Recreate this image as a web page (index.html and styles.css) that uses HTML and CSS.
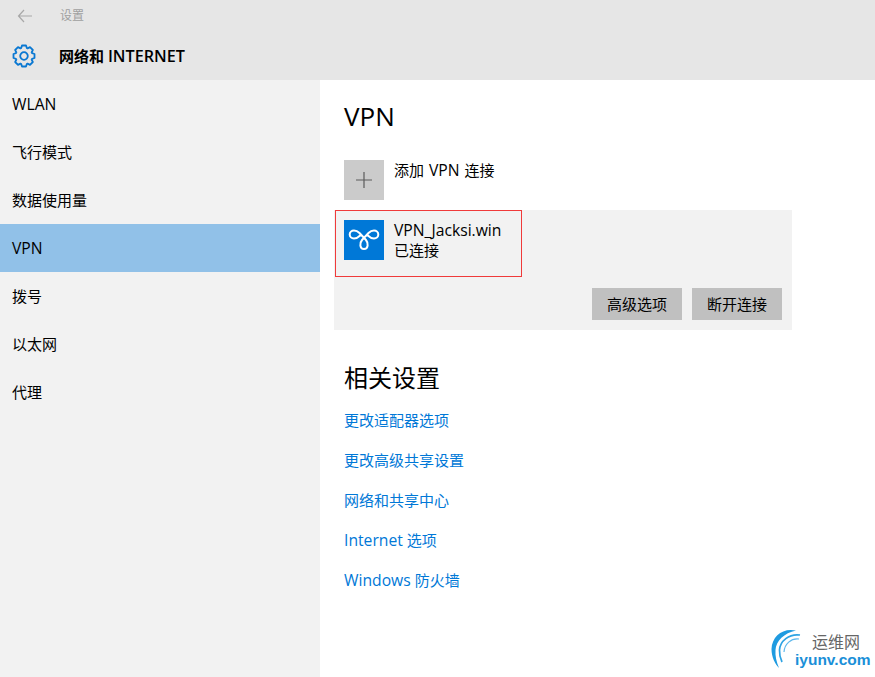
FILE: index.html
```html
<!DOCTYPE html>
<html lang="zh">
<head>
<meta charset="utf-8">
<title>设置</title>
<link rel="stylesheet" href="styles.css">
</head>
<body>
<header class="head">
  <div class="titlebar">
    <svg class="back" width="16" height="14" viewBox="0 0 16 14"><path d="M7 1 1.500 7 7 13M1.500 7H15" fill="none" stroke="#a8a8a8" stroke-width="1.200"/></svg>
    <span class="apptitle">设置</span>
  </div>
  <div class="pagebar">
    <svg class="gear" width="24" height="24" viewBox="-12 -12 24 24">
      <defs><path id="tooth" d="M-3.060-7.390-2-10.500H2L3.060-7.390"/></defs>
      <g fill="none" stroke="#0a78d2" stroke-width="1.800" stroke-linejoin="round">
        <use href="#tooth"/>
        <use href="#tooth" transform="rotate(45)"/>
        <use href="#tooth" transform="rotate(90)"/>
        <use href="#tooth" transform="rotate(135)"/>
        <use href="#tooth" transform="rotate(180)"/>
        <use href="#tooth" transform="rotate(225)"/>
        <use href="#tooth" transform="rotate(270)"/>
        <use href="#tooth" transform="rotate(315)"/>
        <circle r="3.800"/>
      </g>
    </svg>
    <span class="pagetitle">网络和 <span class="lat-head">INTERNET</span></span>
  </div>
</header>
<div class="body">
  <nav class="side">
    <a class="item"><span class="lat">WLAN</span></a>
    <a class="item cjk">飞行模式</a>
    <a class="item cjk">数据使用量</a>
    <a class="item active"><span class="lat">VPN</span></a>
    <a class="item cjk">拨号</a>
    <a class="item cjk">以太网</a>
    <a class="item cjk">代理</a>
  </nav>
  <main class="main">
    <h1 class="h1 vpn-h">VPN</h1>
    <div class="add">
      <span class="addbox"><svg width="16" height="16" viewBox="0 0 16 16"><path d="M8 0v16M0 8h16" stroke="#5c5c5c" stroke-width="1.200" fill="none"/></svg></span>
      <span class="addtext">添加 <span class="lat">VPN</span> 连接</span>
    </div>
    <section class="card">
      <div class="conn">
        <span class="connicon"><svg width="40" height="40" viewBox="0 0 40 40"><path d="M10 18.500C7.500 18.500 5.700 16.700 5.700 14.500 5.700 12.300 7.500 10.500 10 10.500 12.500 10.500 14 11.500 15.500 13L22 20C24.500 23 24.500 29 20 29 15.500 29 15.500 23 18 20L24.500 13C26 11.500 27.500 10.500 30 10.500 32.500 10.500 34.300 12.300 34.300 14.500 34.300 16.700 32.500 18.500 30 18.500 27.500 18.500 26 17.500 24.500 16L23 14.500M10 18.500C12.500 18.500 14 17.500 15.500 16L17 14.500" fill="none" stroke="#fff" stroke-width="2"/></svg></span>
        <div class="conntext"><div class="lat">VPN_Jacksi.win</div><div>已连接</div></div>
      </div>
      <div class="actions">
        <button class="btn">高级选项</button>
        <button class="btn">断开连接</button>
      </div>
      <div class="redbox"></div>
    </section>
    <h2 class="h1 rel-h">相关设置</h2>
    <ul class="links">
      <li><a>更改适配器选项</a></li>
      <li><a>更改高级共享设置</a></li>
      <li><a>网络和共享中心</a></li>
      <li><a><span class="lat">Internet</span> 选项</a></li>
      <li><a><span class="lat">Windows</span> 防火墙</a></li>
    </ul>
  </main>
</div>
<div class="wm">
  <svg class="wmlogo" width="50" height="50" viewBox="0 0 50 50">
    <path d="M28 4.500C15 1.500 4 10 3.500 23 3.500 31 7 38 11 42 8.500 36 7 30 7.500 24 8 15 16 7 28 4.500Z" fill="#1f9be0"/>
    <path d="M32 9C21 7.500 12 15 11.500 24 11.300 29 12.500 33 14 36" fill="none" stroke="#2ea3e3" stroke-width="1.700"/>
    <path d="M31 13C23 12 16.500 18 16 26" fill="none" stroke="#5fb8ec" stroke-width="1.200"/>
  </svg>
  <span class="wmcn">运维网</span>
  <span class="wmen">iyunv.com</span>
</div>
</body>
</html>
```
FILE: styles.css
```css
* { box-sizing: border-box; }
html, body { margin: 0; padding: 0; }
body {
  width: 875px; height: 677px; overflow: hidden; position: relative;
  background: #fff; color: #000;
  font-family: "Open Sans", "Noto Sans CJK SC", sans-serif;
  font-size: 15px;
}
.lat { font-size: 15.7px; }
.head { height: 80px; background: #e6e6e6; }
.titlebar { height: 32px; display: flex; align-items: center; padding-left: 17px; }
.apptitle { margin-left: 27px; padding-bottom: 2px; font-size: 12px; color: #a0a0a0; }
.pagebar { height: 48px; display: flex; align-items: center; padding-left: 12px; }
.gear { display: block; }
.pagetitle { margin-left: 23px; font-size: 15px; font-weight: 600; }
.lat-head { font-size: 16.2px; }
.body { display: flex; height: 597px; }
.side { width: 320px; background: #f2f2f2; display: flex; flex-direction: column; }
.item { height: 48px; display: flex; align-items: center; padding-left: 12px; }
.item.cjk { padding-bottom: 2px; }
.item.active { background: #91c1e8; }
.main { flex: 1; padding-left: 14px; }
.h1 { margin: 0; font-weight: 400; font-size: 24px; line-height: 32px; padding-left: 10px; }
.vpn-h { margin-top: 20px; font-size: 26px; }
.add { display: flex; margin-top: 28px; padding-left: 10px; height: 40px; }
.addbox { width: 40px; height: 40px; background: #cbcbcb; display: flex; align-items: center; justify-content: center; }
.addtext { margin-left: 10px; line-height: 20px; word-spacing: 1px; }
.card { position: relative; width: 458px; height: 120px; margin-top: 10px; background: #f2f2f2; }
.conn { display: flex; padding: 10px 0 0 10px; }
.connicon { width: 40px; height: 40px; background: #0078d7; display: flex; }
.conntext { margin-left: 10px; line-height: 20px; }
.actions { display: flex; justify-content: flex-end; gap: 10px; padding-right: 10px; margin-top: 28px; }
.btn { width: 90px; height: 32px; border: 0; padding: 0 0 2px; background: #c0c0c0; color: #000; font: inherit; }
.redbox { position: absolute; left: 1px; top: 0; width: 187px; height: 67px; border: 1px solid #f03a3a; }
.rel-h { margin-top: 32px; }
.links { list-style: none; margin: 6px 0 0; padding: 0 0 0 10px; }
.links li { height: 40px; line-height: 40px; color: #0078d7; }
.wm { position: absolute; left: 768px; top: 626px; width: 107px; height: 50px; }
.wmlogo { position: absolute; left: 0; top: 0; }
.wmcn { position: absolute; left: 44px; top: 8px; font-size: 16px; line-height: 17px; color: #666; }
.wmen { position: absolute; left: 27px; top: 25px; font-size: 15.5px; line-height: 18px; font-weight: 600; color: #1a8fd8; font-family: "Liberation Sans", sans-serif; }
```
